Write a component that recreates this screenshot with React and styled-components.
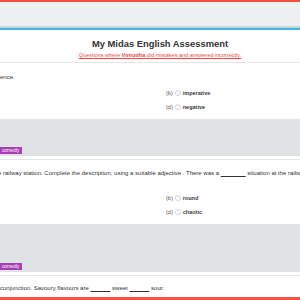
import React from 'react';
import styled, { createGlobalStyle } from 'styled-components';

const GlobalStyle = createGlobalStyle`
  body {
    margin: 0;
    background: #fff;
    font-family: "Liberation Sans", Arial, sans-serif;
    overflow: hidden;
  }
`;

const Page = styled.div`
  width: 300px;
  height: 300px;
  overflow: hidden;
  display: flex;
  flex-direction: column;
`;

const TopBar = styled.div`
  height: 24px;
  background: #eef0f1;
  border-top: 2px solid #f4533f;
  border-bottom: 2px solid #cfd4d7;
  box-shadow: 0 2px 0 #3db6e8;
  margin-bottom: 2px;
`;

const Header = styled.header`
  display: flex;
  flex-direction: column;
  align-items: center;
  padding: 8px 0 3px 20px;
  border-bottom: 1px solid #e4e7e9;
`;

const Title = styled.h1`
  margin: 0;
  font-size: 9.4px;
  line-height: 12px;
  font-weight: bold;
  color: #333;
`;

const Subtitle = styled.p`
  margin: 2px 0 0;
  font-size: 5.5px;
  line-height: 7px;
  color: #f2453d;
  text-decoration: underline;

  b {
    font-weight: bold;
  }
`;

const Question = styled.section`
  display: flex;
  flex-direction: column;
  border-bottom: 1px solid #e4e7e9;
  padding-top: ${p => p.$top}px;
`;

const Stem = styled.div`
  font-size: 6px;
  line-height: 7px;
  color: #333;
  white-space: nowrap;
  margin-left: ${p => p.$indent || 0}px;
`;

const Options = styled.div`
  display: grid;
  grid-template-columns: 166px 1fr;
  grid-auto-rows: 14px;
  margin-top: ${p => p.$gap}px;
`;

const Option = styled.div`
  grid-column: 2;
  display: flex;
  align-items: center;
  gap: 2px;
  font-size: 5.5px;
  color: #333;
`;

const Letter = styled.span`
  color: #555;
`;

const Radio = styled.span`
  width: 4px;
  height: 4px;
  border: 0.6px solid #cfd3d6;
  border-radius: 50%;
  background: #fff;
`;

const Answer = styled.span`
  font-weight: bold;
  color: #3a3a3a;
`;

const Panel = styled.div`
  height: ${p => p.$height}px;
  margin-top: 5px;
  margin-bottom: 3px;
  background: #dfe3e6;
  display: flex;
  align-items: flex-end;
  padding-bottom: 2px;
  box-sizing: border-box;
`;

const Badge = styled.span`
  background: #a73fb4;
  color: #fff;
  font-size: 4.6px;
  line-height: 7px;
  padding: 0 3px 0 2px;
`;

const Footer = styled.div`
  margin-top: auto;
  border-top: 3px solid #f4533f;
`;

const Blank = styled.span`
  text-decoration: underline;
`;

const Last = styled.div`
  padding-top: 9px;
`;

const gap = n => '\u00a0'.repeat(n);

export default function App() {
  return (
    <>
      <GlobalStyle />
      <Page>
        <TopBar />
        <Header>
          <Title>My Midas English Assessment</Title>
          <Subtitle>
            Questions where <b>Virnudha</b> did mistakes and answered incorrectly.
          </Subtitle>
        </Header>

        <Question $top={11}>
          <Stem>ence.</Stem>
          <Options $gap={5}>
            <Option><Letter>(b)</Letter><Radio /><Answer>imperative</Answer></Option>
            <Option><Letter>(d)</Letter><Radio /><Answer>negative</Answer></Option>
          </Options>
          <Panel $height={37}>
            <Badge>correctly</Badge>
          </Panel>
        </Question>

        <Question $top={10}>
          <Stem $indent={-2}>
            e railway station. Complete the description, using a suitable adjective . There was a <Blank>{gap(15)}</Blank> situation at the railway
          </Stem>
          <Options $gap={14}>
            <Option><Letter>(b)</Letter><Radio /><Answer>round</Answer></Option>
            <Option><Letter>(d)</Letter><Radio /><Answer>chaotic</Answer></Option>
          </Options>
          <Panel $height={48}>
            <Badge>correctly</Badge>
          </Panel>
        </Question>

        <Last>
          <Stem>
            conjunction. Savoury flavours are <Blank>{gap(12)}</Blank> sweet <Blank>{gap(12)}</Blank> sour.
          </Stem>
        </Last>
        <Footer />
      </Page>
    </>
  );
}
